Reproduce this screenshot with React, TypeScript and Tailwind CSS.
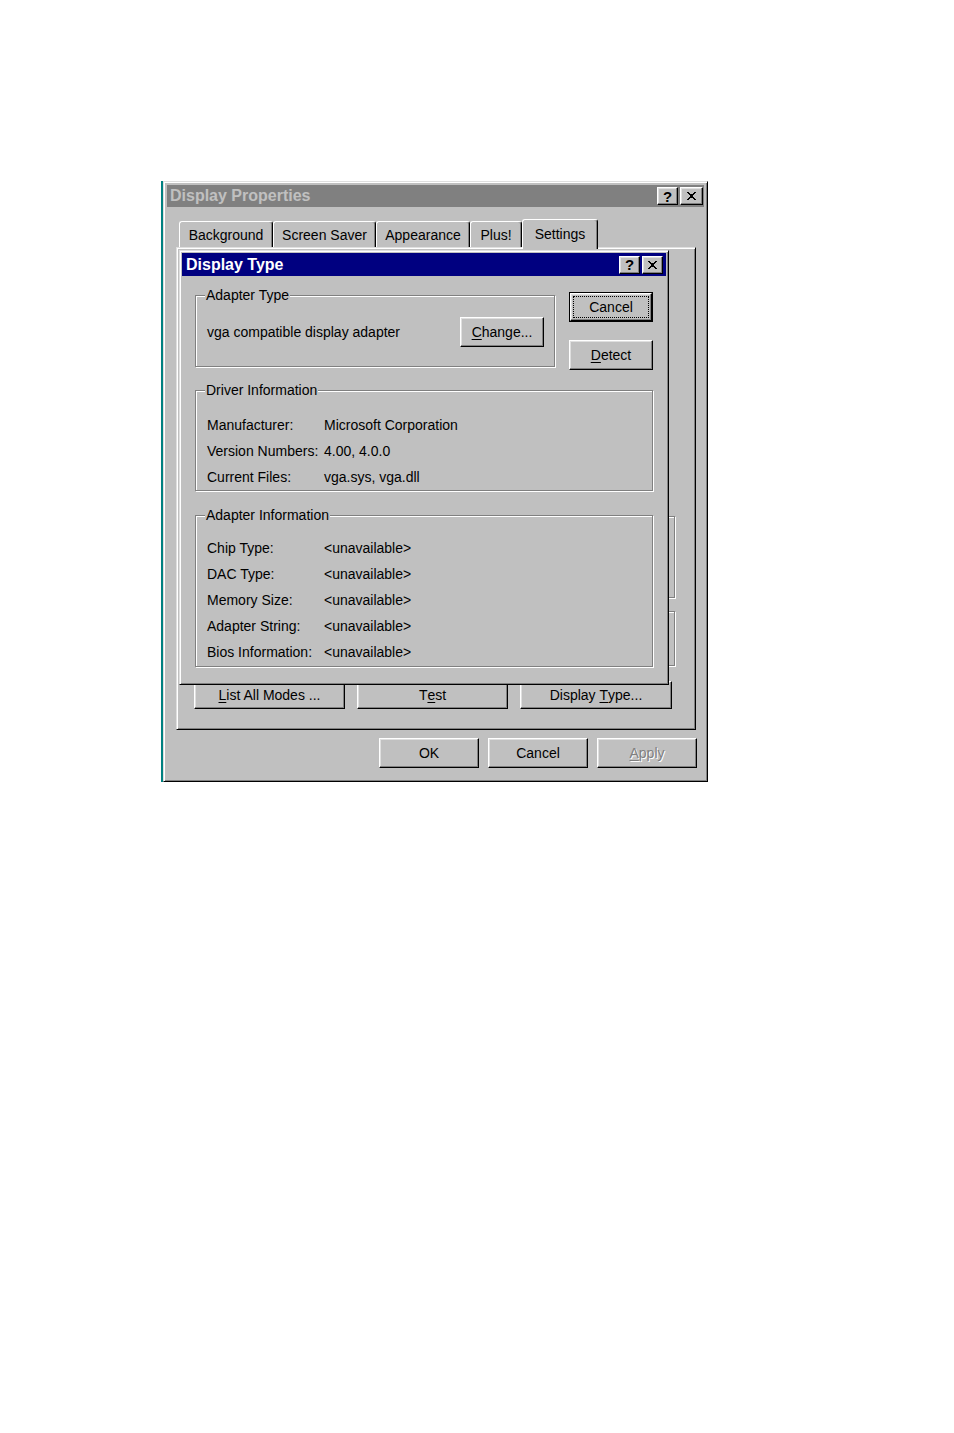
import React from "react";

const raised =
  "border border-t-white border-l-white border-r-black border-b-black shadow-[inset_-1px_-1px_0_#808080,inset_1px_1px_0_#dfdfdf]";
const frame =
  "border border-t-[#dfdfdf] border-l-[#dfdfdf] border-r-black border-b-black shadow-[inset_1px_1px_0_#fff,inset_-1px_-1px_0_#808080]";
const etched = "border border-[#808080] shadow-[inset_1px_1px_0_#fff,1px_1px_0_#fff]";

const CloseGlyph = () => (
  <svg width="9" height="8" viewBox="0 0 9 8" shapeRendering="crispEdges">
    <path d="M0 0h2v1h-2zM7 0h2v1h-2zM1 1h2v1h-2zM6 1h2v1h-2zM2 2h5v1h-5zM3 3h3v2h-3zM2 5h5v1h-5zM1 6h2v1h-2zM6 6h2v1h-2zM0 7h2v1h-2zM7 7h2v1h-2z" fill="#000" />
  </svg>
);

const CapBtn = ({ children, w }: { children: React.ReactNode; w: string }) => (
  <div className={`${raised} ${w} h-[18px] bg-[#c0c0c0] flex items-center justify-center text-[15px] font-bold leading-none text-black`}>
    {children}
  </div>
);

const Btn = ({
  children,
  className = "",
  disabled = false,
}: {
  children: React.ReactNode;
  className?: string;
  disabled?: boolean;
}) => (
  <div
    className={`${raised} ${className} bg-[#c0c0c0] flex items-center justify-center text-[14px] ${
      disabled ? "text-[#808080] [text-shadow:1px_1px_0_#fff]" : "text-black"
    }`}
  >
    {children}
  </div>
);

const DefaultBtn = ({ children, className = "" }: { children: React.ReactNode; className?: string }) => (
  <div className={`border border-black flex ${className}`}>
    <div className={`${raised} flex-1 flex bg-[#c0c0c0] p-[2px]`}>
      <div className="flex-1 flex items-center justify-center border border-dotted border-black text-[14px] text-black">
        {children}
      </div>
    </div>
  </div>
);

const Group = ({
  label,
  className = "",
  children,
}: {
  label: string;
  className?: string;
  children?: React.ReactNode;
}) => (
  <div className={`${etched} ${className} flex flex-col`}>
    <div className="-mt-[9px] ml-[9px] w-fit bg-[#c0c0c0] px-[1px] leading-[16px] text-[14px] text-black">{label}</div>
    {children}
  </div>
);

const InfoRow = ({ label, value }: { label: string; value: string }) => (
  <div className="flex h-[26px] items-center text-[14px] text-black">
    <span className="w-[117px] shrink-0">{label}</span>
    <span>{value}</span>
  </div>
);

const tabs = [
  { label: "Background", w: "w-[94px]" },
  { label: "Screen Saver", w: "w-[103px]" },
  { label: "Appearance", w: "w-[94px]" },
  { label: "Plus!", w: "w-[52px]" },
];

export default function App() {
  return (
    <div className="min-h-[1433px] bg-white font-['Liberation_Sans',Arial,sans-serif]">
      <div className="flex pl-[161px] pt-[181px]">
        <div className="w-[2px] h-[601px] bg-[#008080]" />
        {/* Display Properties window */}
        <div className={`${frame} w-[545px] h-[601px] bg-[#c0c0c0] p-[3px] flex flex-col`}>
          <div className="h-[22px] bg-[#808080] flex items-center justify-between pl-[3px] pr-[1px]">
            <span className="text-[16px] font-bold text-[#c0c0c0]">Display Properties</span>
            <div className="flex gap-[2px]">
              <CapBtn w="w-[21px]">?</CapBtn>
              <CapBtn w="w-[23px]">
                <CloseGlyph />
              </CapBtn>
            </div>
          </div>

          {/* tabs */}
          <div className="mt-[12px] ml-[9px] h-[28px] flex items-end pl-[3px]">
            {tabs.map((t) => (
              <div
                key={t.label}
                className={`${t.w} h-[26px] border-t border-l border-r border-white border-r-black rounded-t-[3px] shadow-[inset_-1px_0_0_#808080] flex items-center justify-center pt-[1px] text-[14px] text-black`}
              >
                {t.label}
              </div>
            ))}
            <div className="relative z-10 -mb-[2px] w-[76px] h-[30px] bg-[#c0c0c0] border-t border-l border-r border-white border-r-black rounded-t-[3px] shadow-[inset_-1px_0_0_#808080] flex justify-center pt-[4px] text-[14px] text-black">
              Settings
            </div>
          </div>

          {/* tab panel */}
          <div className={`${frame} relative ml-[9px] w-[520px] h-[483px] flex flex-col justify-end items-end pb-[20px] pl-[17px] pr-[20px]`}>
            <div className={`${etched} w-[300px] h-[82px]`} />
            <div className={`${etched} mt-[13px] w-[300px] h-[55px]`} />
            <div className="mt-[15px] flex gap-[12px] self-start">
              <Btn className="w-[151px] h-[28px]">
                <u className="underline-offset-2">L</u>ist All Modes ...
              </Btn>
              <Btn className="w-[151px] h-[28px]">
                T<u className="underline-offset-2">e</u>st
              </Btn>
              <Btn className="w-[152px] h-[28px]">
                Display&nbsp;<u className="underline-offset-2">T</u>ype...
              </Btn>
            </div>

            {/* Display Type dialog over the panel */}
            <div className={`${frame} absolute left-[2px] top-[2px] w-[490px] h-[435px] bg-[#c0c0c0] p-[2px] flex flex-col`}>
              <div className="h-[23px] bg-[#000080] flex items-center justify-between pl-[4px] pr-[3px]">
                <span className="text-[16px] font-bold text-white">Display Type</span>
                <div className="flex gap-[2px]">
                  <CapBtn w="w-[21px]">?</CapBtn>
                  <CapBtn w="w-[21px]">
                    <CloseGlyph />
                  </CapBtn>
                </div>
              </div>

              <div className="pl-[13px] flex flex-col">
                <div className="flex items-start">
                  <Group label="Adapter Type" className="mt-[19px] w-[360px] h-[72px]">
                    <div className="mt-[14px] flex items-center justify-between pl-[11px] pr-[10px]">
                      <span className="text-[14px] text-black">vga compatible display adapter</span>
                      <Btn className="w-[84px] h-[30px]">
                        <u className="underline-offset-2">C</u>hange...
                      </Btn>
                    </div>
                  </Group>
                  <div className="ml-[14px] mt-[16px] flex flex-col gap-[18px]">
                    <DefaultBtn className="w-[84px] h-[30px]">Cancel</DefaultBtn>
                    <Btn className="w-[84px] h-[30px]">
                      <u className="underline-offset-2">D</u>etect
                    </Btn>
                  </div>
                </div>

                <Group label="Driver Information" className="mt-[20px] w-[458px] h-[101px]">
                  <div className="mt-[14px] pl-[11px]">
                    <InfoRow label="Manufacturer:" value="Microsoft Corporation" />
                    <InfoRow label="Version Numbers:" value="4.00, 4.0.0" />
                    <InfoRow label="Current Files:" value="vga.sys, vga.dll" />
                  </div>
                </Group>

                <Group label="Adapter Information" className="mt-[24px] w-[458px] h-[152px]">
                  <div className="mt-[12px] pl-[11px]">
                    <InfoRow label="Chip Type:" value="<unavailable>" />
                    <InfoRow label="DAC Type:" value="<unavailable>" />
                    <InfoRow label="Memory Size:" value="<unavailable>" />
                    <InfoRow label="Adapter String:" value="<unavailable>" />
                    <InfoRow label="Bios Information:" value="<unavailable>" />
                  </div>
                </Group>
              </div>
            </div>
          </div>

          {/* bottom buttons */}
          <div className="mt-[8px] flex justify-end gap-[9px] pr-[7px]">
            <Btn className="w-[100px] h-[30px]">OK</Btn>
            <Btn className="w-[100px] h-[30px]">Cancel</Btn>
            <Btn className="w-[100px] h-[30px]" disabled>
              <u className="underline-offset-2">A</u>pply
            </Btn>
          </div>
        </div>
      </div>
    </div>
  );
}
